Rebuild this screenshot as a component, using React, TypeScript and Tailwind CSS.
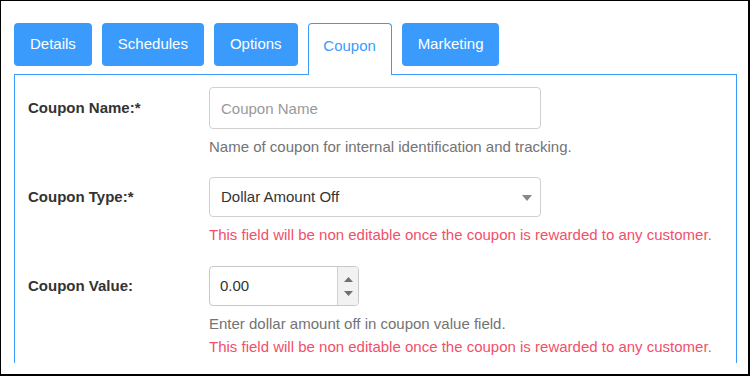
const tabs = ["Details", "Schedules", "Options", "Coupon", "Marketing"];

const Warning = ({ className = "" }: { className?: string }) => (
  <p className={`text-[15px] leading-[20px] text-[#f25068] ${className}`}>
    This field will be non editable once the coupon is rewarded to any customer.
  </p>
);

export default function App() {
  const active = "Coupon";

  return (
    <div
      className="w-[750px] h-[376px] bg-white overflow-hidden border-t border-l border-r-2 border-b-2 border-black pl-[13px] pt-[22px]"
      style={{ fontFamily: '"Liberation Sans", Arial, sans-serif' }}
    >
      {/* tab strip */}
      <div className="flex items-start gap-[10px] h-[51px]">
        {tabs.map((t) =>
          t === active ? (
            <div
              key={t}
              className="relative z-10 h-[52px] w-[84px] flex items-start justify-center pt-[11px] bg-white border border-b-0 border-[#3a9bfd] rounded-t-[4px] text-[15px] text-[#3a9bfd]"
            >
              {t}
            </div>
          ) : (
            <button
              key={t}
              className="h-[43px] px-4 rounded-[4px] bg-[#3a9bfd] text-white text-[15px]"
            >
              {t}
            </button>
          )
        )}
      </div>

      {/* panel */}
      <div className="w-[723px] h-[289px] border-t border-l border-r border-[#3a9bfd] pl-[13px] pt-[12px]">
        {/* coupon name */}
        <div className="flex items-center">
          <label className="w-[181px] text-[15px] font-bold text-[#333]">Coupon Name:*</label>
          <input
            placeholder="Coupon Name"
            className="w-[332px] h-[42px] border border-[#d0d0d0] rounded-[4px] px-[11px] text-[15px] text-[#333] placeholder:text-[#999] outline-none"
          />
        </div>
        <p className="ml-[181px] mt-[8px] text-[15px] leading-[20px] text-[#737373]">
          Name of coupon for internal identification and tracking.
        </p>

        {/* coupon type */}
        <div className="flex items-center mt-[20px]">
          <label className="w-[181px] text-[15px] font-bold text-[#333]">Coupon Type:*</label>
          <div className="relative w-[332px] h-[40px] border border-[#d0d0d0] rounded-[4px] flex items-center px-[11px] text-[15px] text-[#333]">
            Dollar Amount Off
            <svg className="absolute right-[8px] top-[17px]" width="10" height="6" viewBox="0 0 10 6">
              <path d="M0 0h10L5 6z" fill="#888" />
            </svg>
          </div>
        </div>
        <Warning className="ml-[181px] mt-[8px]" />

        {/* coupon value */}
        <div className="flex items-center mt-[21px]">
          <label className="w-[181px] text-[15px] font-bold text-[#333]">Coupon Value:</label>
          <div className="w-[150px] h-[40px] border border-[#c8c8c8] rounded-[4px] flex overflow-hidden">
            <div className="flex-1 flex items-center px-[10px] text-[15px] text-[#333]">0.00</div>
            <div className="w-[21px] bg-[#f2f2f2] border-l border-[#d0d0d0] flex flex-col items-center justify-center gap-[9px]">
              <svg width="9" height="5" viewBox="0 0 9 5">
                <path d="M0 5h9L4.5 0z" fill="#707070" />
              </svg>
              <svg width="9" height="5" viewBox="0 0 9 5">
                <path d="M0 0h9L4.5 5z" fill="#707070" />
              </svg>
            </div>
          </div>
        </div>
        <p className="ml-[181px] mt-[8px] text-[15px] leading-[20px] text-[#737373]">
          Enter dollar amount off in coupon value field.
        </p>
        <Warning className="ml-[181px] mt-[3px]" />
      </div>
    </div>
  );
}
